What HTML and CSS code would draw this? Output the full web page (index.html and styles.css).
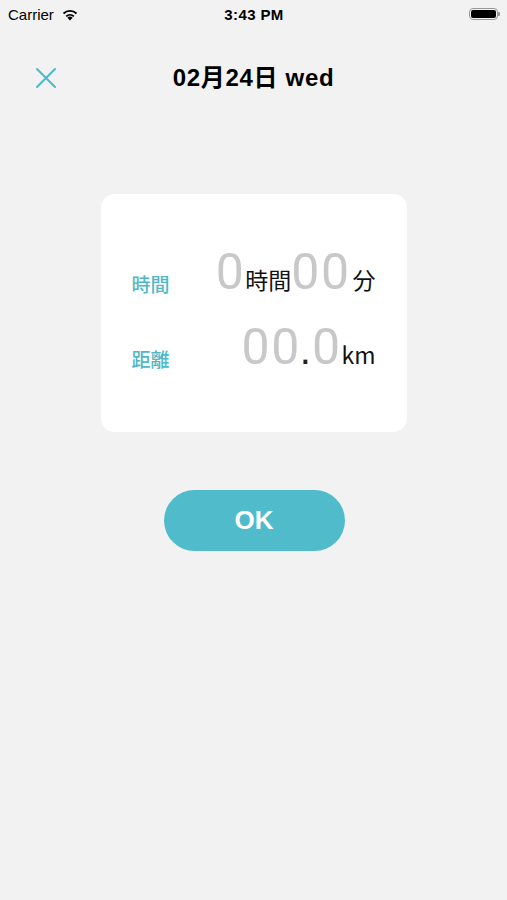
FILE: index.html
```html
<!DOCTYPE html>
<html lang="ja">
<head>
    <meta charset="UTF-8">
    <meta name="viewport" content="width=device-width, initial-scale=1.0">
    <title>記録入力</title>
    <link rel="stylesheet" href="styles.css">
</head>
<body>
    <div class="status-bar">
        <div class="status-left">
            <span>Carrier</span>
            <svg class="wifi" width="18" height="13" viewBox="0 0 16 12">
                <path d="M8 11.5 L5.6 8.9 A3.6 3.6 0 0 1 10.4 8.9 Z" fill="#000"/>
                <path d="M3.9 7.1 A6 6 0 0 1 12.1 7.1 L11 8.3 A4.4 4.4 0 0 0 5 8.3 Z" fill="#000"/>
                <path d="M1.4 4.4 A9.6 9.6 0 0 1 14.6 4.4 L13.4 5.7 A7.8 7.8 0 0 0 2.6 5.7 Z" fill="#000"/>
            </svg>
        </div>
        <div class="status-time">3:43 PM</div>
        <div class="status-right">
            <div class="battery"><div class="battery-fill"></div></div>
            <div class="battery-tip"></div>
        </div>
    </div>

    <div class="nav">
        <svg class="close" width="22" height="22" viewBox="0 0 22 22">
            <path d="M2 2 L20 20 M20 2 L2 20" stroke="#4fb8c8" stroke-width="2" stroke-linecap="round"/>
        </svg>
        <h1 class="title">02月24日 wed</h1>
    </div>

    <div class="card">
        <div class="row">
            <span class="label">時間</span>
            <span class="value">
                <span class="digits">0</span><span class="unit">時間</span><span class="digits">00</span><span class="unit unit-gap">分</span>
            </span>
        </div>
        <div class="row">
            <span class="label">距離</span>
            <span class="value">
                <span class="digits">00</span><span class="dot">.</span><span class="digits">0</span><span class="unit">km</span>
            </span>
        </div>
    </div>

    <button class="ok-button">OK</button>
</body>
</html>
```

FILE: styles.css
```css
body {
    margin: 0;
    width: 507px;
    height: 900px;
    background: #f2f2f2;
    font-family: "Liberation Sans", "Noto Sans CJK JP", sans-serif;
    color: #000;
    display: flex;
    flex-direction: column;
    align-items: center;
}
.status-bar {
    width: 100%;
    box-sizing: border-box;
    height: 28px;
    padding: 0 7px 0 8px;
    display: flex;
    align-items: center;
    justify-content: space-between;
    font-size: 15px;
}
.status-left {
    display: flex;
    align-items: center;
    gap: 7px;
    width: 120px;
}
.status-time {
    font-weight: bold;
    font-size: 15px;
    letter-spacing: 0.4px;
}
.status-right {
    width: 120px;
    display: flex;
    justify-content: flex-end;
    align-items: center;
}
.battery {
    width: 29px;
    height: 12px;
    border: 1px solid #999;
    border-radius: 4px;
    padding: 1px;
    box-sizing: border-box;
}
.battery-fill {
    width: 100%;
    height: 100%;
    background: #000;
    border-radius: 2px;
}
.battery-tip {
    width: 2px;
    height: 4px;
    background: #999;
    border-radius: 0 1px 1px 0;
}
.nav {
    width: 100%;
    height: 98px;
    position: relative;
    display: flex;
    align-items: center;
    justify-content: center;
}
.close {
    position: absolute;
    left: 35px;
    top: 39px;
}
.title {
    margin: 0 0 4px 0;
    font-size: 24px;
    font-weight: bold;
    letter-spacing: 0.7px;
}
.card {
    margin-top: 68px;
    width: 306px;
    height: 238px;
    box-sizing: border-box;
    background: #fff;
    border-radius: 14px;
    padding: 51px 31px 0 31px;
    display: flex;
    flex-direction: column;
    gap: 21px;
}
.row {
    display: flex;
    align-items: baseline;
    justify-content: space-between;
}
.label {
    color: #4fb8c8;
    font-family: "Noto Sans CJK JP", sans-serif;
    font-size: 19px;
    font-weight: 500;
    position: relative;
    top: 3px;
}
.value {
    display: flex;
    align-items: baseline;
}
.digits {
    font-family: "Roboto", "Liberation Sans", sans-serif;
    color: #c8c8c8;
    font-size: 50px;
    line-height: 54px;
    letter-spacing: 1.5px;
}
.dot {
    font-size: 40px;
    color: #222;
    margin: 0 1px 0 -1px;
}
.unit {
    font-family: "Noto Sans CJK JP", sans-serif;
    font-size: 23px;
    color: #111;
}
.unit-gap {
    margin-left: 2px;
}
.ok-button {
    margin: 58px 0 0 1px;
    width: 181px;
    height: 61px;
    border: none;
    border-radius: 31px;
    background: #50bccb;
    color: #fff;
    font-family: "Liberation Sans", sans-serif;
    font-weight: bold;
    font-size: 26px;
}
```
